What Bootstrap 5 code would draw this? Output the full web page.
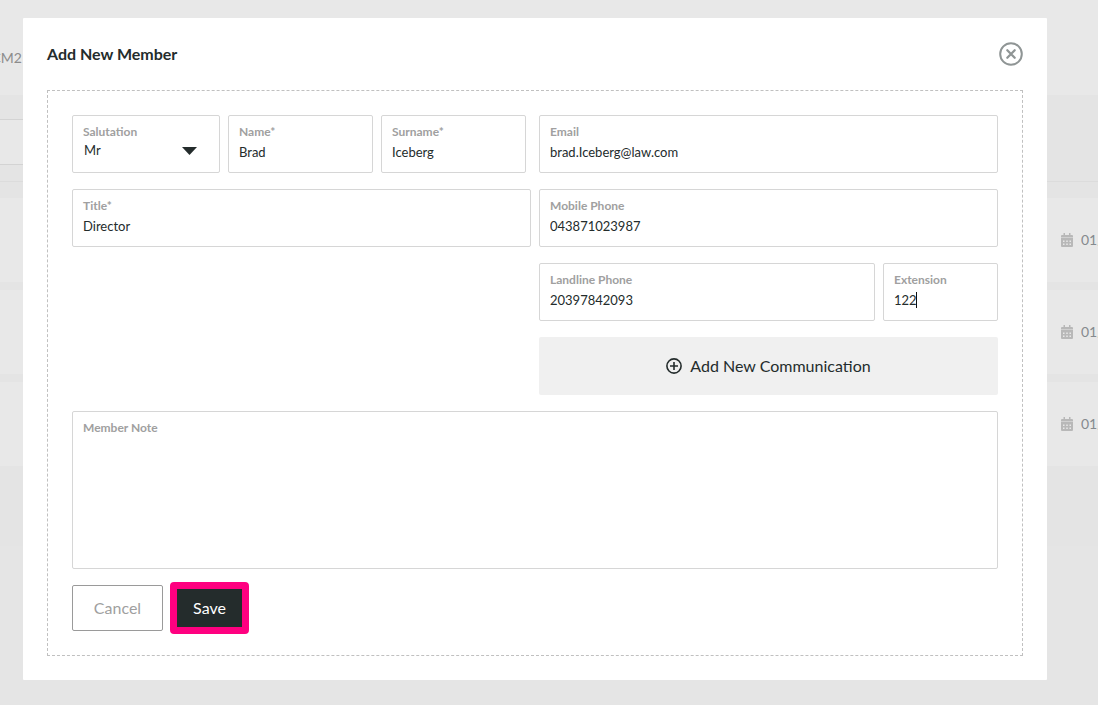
<!DOCTYPE html>
<html lang="en">
<head>
<meta charset="utf-8">
<meta name="viewport" content="width=device-width, initial-scale=1">
<title>Add New Member</title>
<link href="https://cdn.jsdelivr.net/npm/bootstrap@5.3.0/dist/css/bootstrap.min.css" rel="stylesheet">
<style>
  body { font-family: Lato, "Open Sans", sans-serif; font-size: 14px; line-height: 20px; color: #242c2c; background: #e5e5e5; overflow: hidden; }
  /* page behind the dialog */
  .page-head { background: #e8e8e8; height: 95px; color: #8c8c8c; line-height: 16px; padding-top: 50px; }
  .postcode { width: 22px; }
  .page-body { background: #e4e4e4; height: 451px; padding-top: 24px; }
  .filter-bar { height: 46px; background: #e8e8e8; border: 1px solid #d3d3d3; border-width: 1px 0; width: 50%; }
  .filter-rule { border-top: 1px solid #dcdcdc; margin-top: 16px; height: 17px; }
  .member-row { background: #e8e8e8; height: 84px; color: #858a8e; white-space: nowrap; }
  .member-date { width: 37px; }
  /* dialog */
  .overlay { position: fixed; inset: 0; padding: 18px 51px 24px 23px; overflow: hidden; }
  .dialog-box { background: #fff; padding: 24px; border-radius: 1px; }
  .dialog-title { font-size: 16px; line-height: 24px; font-weight: 700; }
  .close-btn { color: #8f9595; line-height: 0; }
  .form-frame { border: 1px dashed #c0c0c0; padding: 24px; margin-top: 24px; }
  .half-grid { display: grid; grid-template-columns: 1fr 1fr; gap: 16px 8px; }
  .name-grid { display: grid; grid-template-columns: 148fr 145fr 145fr; gap: 8px; padding-right: 5px; }
  .phone-grid { display: grid; grid-template-columns: 336fr 115fr; gap: 8px; }
  .field { border: 1px solid #d6d6d6; border-radius: 2px; height: 58px; padding: 8px 10px; min-width: 0; }
  .field label { display: block; font-size: 12px; line-height: 16px; font-weight: 700; color: #a0a0a0; }
  .field input, .field select, .field textarea { border: 0; padding: 0; margin: 0; outline: 0; background: transparent; color: #242c2c; font-size: 13px; line-height: 20px; width: 100%; display: block; height: 24px; border-radius: 0; }
  .field select { appearance: none; height: 20px; padding-left: 1px; }
  .field .arrow { position: absolute; right: 12px; top: 7px; pointer-events: none; }
  .field .ext-input { width: 22px; }
  .caret { width: 1px; height: 16px; background: #111; }
  .note-field { height: 158px; margin-top: 16px; }
  .note-field textarea { height: 120px; resize: none; }
  .add-btn { background: #f0f0f0; border: 0; border-radius: 2px; height: 58px; font-size: 16px; color: #242c2c; gap: 8px; }
  .cancel-btn { width: 91px; height: 46px; border: 1px solid #9a9a9a; border-radius: 2px; background: #fff; color: #9f9f9f; font-size: 16px; }
  .save-btn { width: 79px; height: 52px; border: 7px solid #ff0080; border-radius: 4px; background: #242c2c; color: #fff; font-size: 16px; }
  .actions { gap: 7px; margin: 13px 0 -3px; }
</style>
</head>
<body>
<svg class="d-none">
  <symbol id="calendar" viewBox="0 0 12 14">
    <path fill="#b8b8b8" d="M1 2h1.500V0H4v2h4V0h1.500v2H11a1 1 0 0 1 1 1v1.500H0V3a1 1 0 0 1 1-1zM0 5h12V13a1 1 0 0 1-1 1H1a1 1 0 0 1-1-1z"/>
    <path fill="#e8e8e8" d="M2 7.500h1.500V9H2zm3.250 0h1.500V9h-1.500zm3.250 0H10V9H8.500zM2 10.500h1.500V12H2zm3.250 0h1.500V12h-1.500zm3.250 0H10V12H8.500z"/>
  </symbol>
</svg>
<main>
  <div class="page-head"><div class="postcode d-flex justify-content-end">CM2</div></div>
  <div class="page-body">
    <div class="filter-bar"></div>
    <div class="filter-rule"></div>
    <div class="d-flex flex-column gap-2">
      <div class="member-row d-flex align-items-center justify-content-end"><div class="member-date d-flex align-items-center"><svg class="flex-shrink-0 me-2" width="12" height="14"><use href="#calendar"/></svg>01/</div></div>
      <div class="member-row d-flex align-items-center justify-content-end"><div class="member-date d-flex align-items-center"><svg class="flex-shrink-0 me-2" width="12" height="14"><use href="#calendar"/></svg>01/</div></div>
      <div class="member-row d-flex align-items-center justify-content-end"><div class="member-date d-flex align-items-center"><svg class="flex-shrink-0 me-2" width="12" height="14"><use href="#calendar"/></svg>01/</div></div>
    </div>
  </div>
</main>

<div class="overlay">
  <div class="dialog-box" role="dialog" aria-labelledby="dialogTitle">
    <div class="d-flex justify-content-between align-items-center">
      <h1 class="dialog-title m-0" id="dialogTitle">Add New Member</h1>
      <button type="button" class="close-btn btn p-0 border-0" aria-label="Close">
        <svg width="24" height="24" viewBox="0 0 24 24" fill="none" stroke="currentColor"><circle cx="12" cy="12" r="10.800" stroke-width="2"/><path stroke-width="2.300" stroke-linecap="round" d="M8.300 8.300l7.400 7.400M15.700 8.300l-7.400 7.400"/></svg>
      </button>
    </div>
    <form class="form-frame">
      <div class="half-grid">
        <div class="name-grid">
          <div class="field">
            <label for="salutation">Salutation</label>
            <div class="position-relative">
              <select id="salutation"><option>Mr</option><option>Mrs</option><option>Ms</option></select>
              <svg class="arrow" width="15" height="8" viewBox="0 0 15 8"><path fill="#242c2c" d="M0 0h15L7.500 8z"/></svg>
            </div>
          </div>
          <div class="field"><label for="name">Name*</label><input id="name" type="text" value="Brad"></div>
          <div class="field"><label for="surname">Surname*</label><input id="surname" type="text" value="Iceberg"></div>
        </div>
        <div class="field"><label for="email">Email</label><input id="email" type="text" value="brad.Iceberg@law.com"></div>
        <div class="field"><label for="jobtitle">Title*</label><input id="jobtitle" type="text" value="Director"></div>
        <div class="field"><label for="mobile">Mobile Phone</label><input id="mobile" type="text" value="043871023987"></div>
        <div></div>
        <div class="phone-grid">
          <div class="field"><label for="landline">Landline Phone</label><input id="landline" type="text" value="20397842093"></div>
          <div class="field"><label for="extension">Extension</label>
            <div class="d-flex align-items-center"><input class="ext-input" id="extension" type="text" value="122"><span class="caret"></span></div>
          </div>
        </div>
        <div></div>
        <button type="button" class="add-btn d-flex align-items-center justify-content-center">
          <svg width="16" height="16" viewBox="0 0 16 16" fill="none" stroke="currentColor" stroke-width="1.600"><circle cx="8" cy="8" r="7.100"/><path d="M8 4v8M4 8h8"/></svg>
          Add New Communication
        </button>
      </div>
      <div class="field note-field"><label for="note">Member Note</label><textarea id="note"></textarea></div>
      <div class="actions d-flex align-items-center">
        <button type="button" class="cancel-btn">Cancel</button>
        <button type="submit" class="save-btn p-0">Save</button>
      </div>
    </form>
  </div>
</div>
<script src="https://cdn.jsdelivr.net/npm/bootstrap@5.3.0/dist/js/bootstrap.bundle.min.js"></script>
</body>
</html>
